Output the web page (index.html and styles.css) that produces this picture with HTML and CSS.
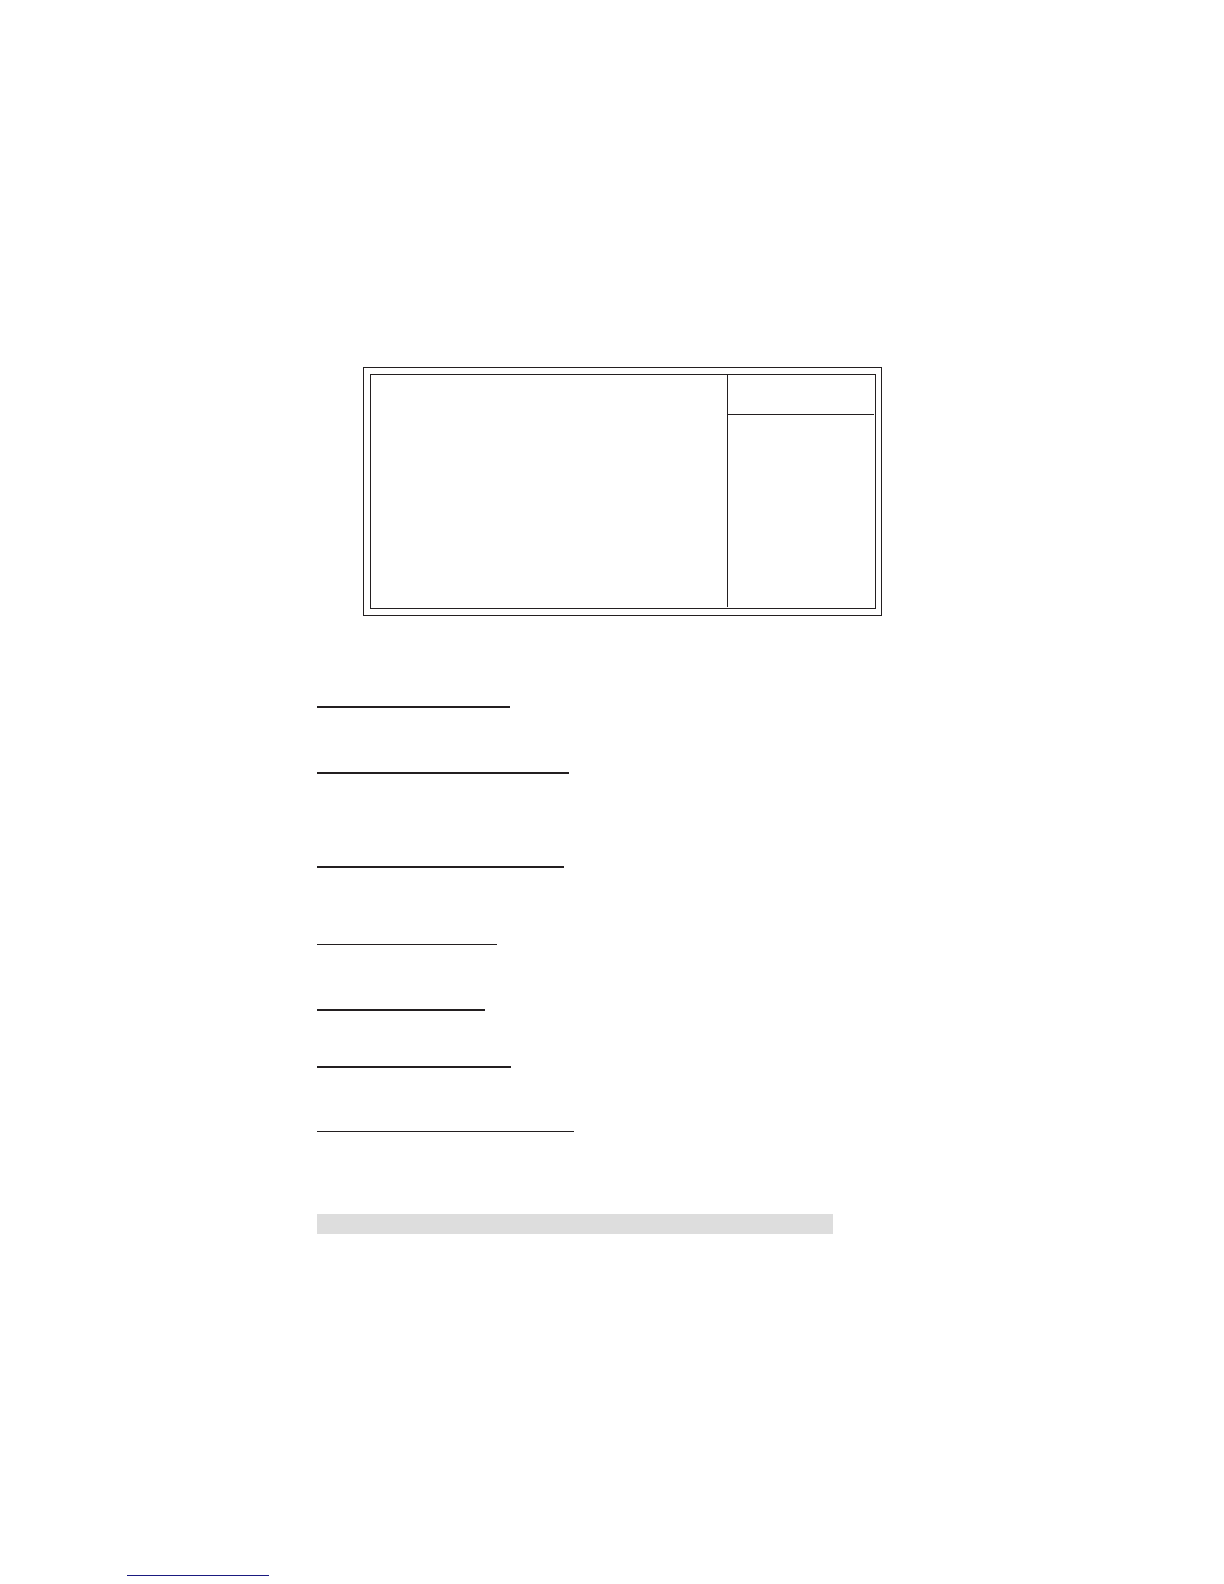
FILE: index.html
```
<!DOCTYPE html>
<html lang="en">
<head>
<meta charset="utf-8">
<meta name="viewport" content="width=device-width, initial-scale=1">
<title>Setup</title>
<link rel="stylesheet" href="styles.css">
</head>
<body>
<main class="page">
  <div class="frame">
    <div class="panel">
      <div class="panel-main"></div>
      <div class="panel-side">
        <div class="side-head"></div>
      </div>
    </div>
  </div>
  <div class="sections">
    <section class="section space-66"><hr class="rule w-193"></section>
    <section class="section space-94"><hr class="rule w-252"></section>
    <section class="section space-78"><hr class="rule w-247"></section>
    <section class="section space-65"><hr class="rule thin w-180"></section>
    <section class="section space-57"><hr class="rule w-168"></section>
    <section class="section space-65"><hr class="rule w-194"></section>
    <section class="section space-83"><hr class="rule thin w-257"></section>
    <div class="bar"></div>
  </div>
</main>
<footer class="footer"><hr class="footer-rule"></footer>
</body>
</html>
```
FILE: styles.css
```
* {
  box-sizing: border-box;
}

body {
  margin: 0;
  background: #fff;
  font-family: "Liberation Sans", Arial, sans-serif;
}

.page {
  padding: 367px 342px 0 317px;
}

/* Double-ruled frame with a side column */
.frame {
  margin: 0 0 90px 46px;
  padding: 6px 5px 6px 6px;
  border: 1px solid #231f20;
}

.panel {
  display: grid;
  grid-template-columns: 1fr 147px;
  min-height: 235px;
  padding: 0 1px 1px 0;
  border: 1px solid #231f20;
}

.panel-side {
  border-left: 1px solid #231f20;
}

.side-head {
  height: 40px;
  border-bottom: 1px solid #231f20;
}

/* Ruled sections */
.space-57 { min-height: 57px; }
.space-65 { min-height: 65px; }
.space-66 { min-height: 66px; }
.space-78 { min-height: 78px; }
.space-83 { min-height: 83px; }
.space-94 { min-height: 94px; }

.section {
  display: flex;
  align-items: flex-start;
}

.rule {
  height: 2px;
  margin: 0;
  border: 0;
  background: #231f20;
}

.thin { height: 1px; }

.w-168 { width: 168px; }
.w-180 { width: 180px; }
.w-193 { width: 193px; }
.w-194 { width: 194px; }
.w-247 { width: 247px; }
.w-252 { width: 252px; }
.w-257 { width: 257px; }

.bar {
  max-width: 516px;
  height: 20px;
  background: #ddd;
}

.footer {
  padding: 341px 127px 8px;
}

.footer-rule {
  width: 142px;
  height: 1px;
  margin: 0;
  border: 0;
  background: #1a1a80;
}
```
